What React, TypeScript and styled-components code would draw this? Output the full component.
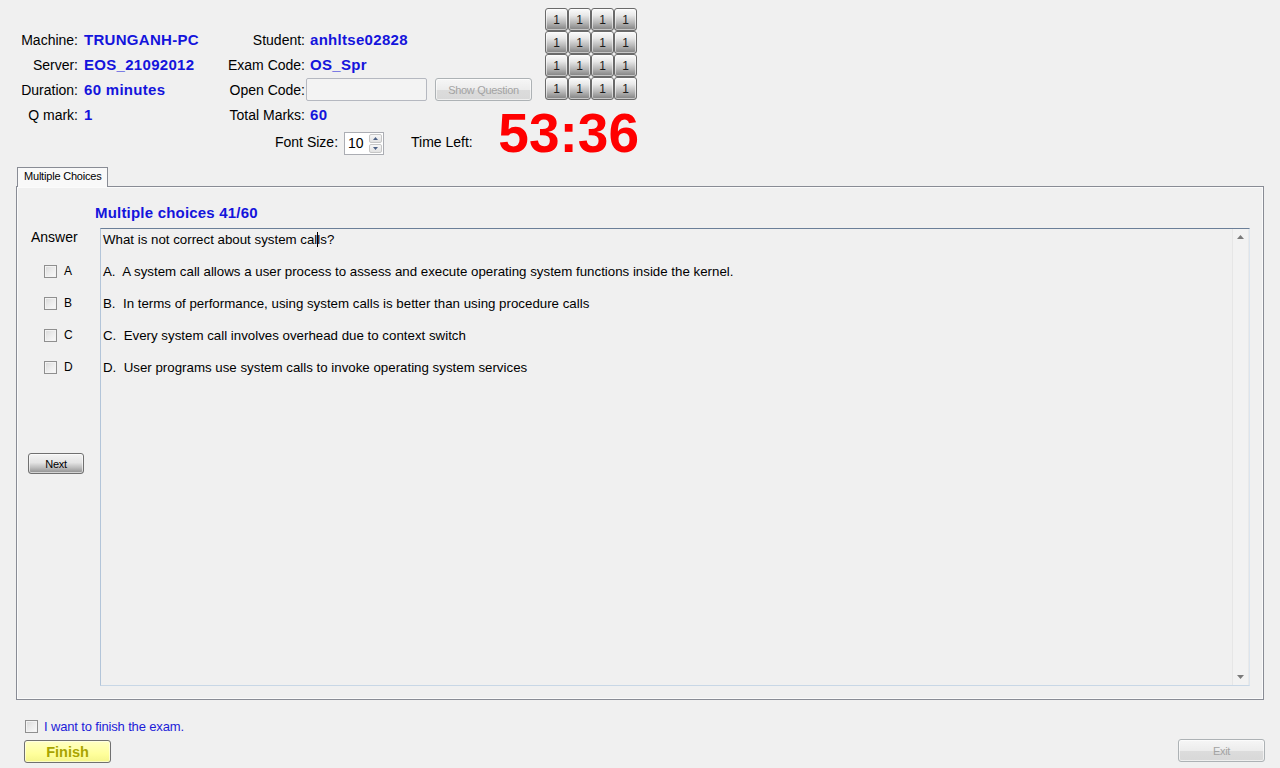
import React from "react";
import styled, { createGlobalStyle } from "styled-components";

const GlobalStyle = createGlobalStyle`
  html, body { margin: 0; padding: 0; background: #f0f0f0; }
  body { font-family: "Liberation Sans", Arial, sans-serif; color: #000; }
  * { box-sizing: border-box; }
`;

const Window = styled.div`
  width: 1280px;
  height: 768px;
  overflow: hidden;
  background: #f0f0f0;
  display: flex;
  flex-direction: column;
`;

const Header = styled.div`
  display: grid;
  grid-template-columns: 78px 132px 95px 194px 46px 92px;
  grid-template-rows: 27px 25px 25px 25px 25px 38px;
  font-size: 14px;
`;

const Label = styled.div<{ $col: number; $row: number }>`
  grid-column: ${(p) => p.$col};
  grid-row: ${(p) => p.$row};
  align-self: center;
  text-align: right;
  white-space: nowrap;
  line-height: 16px;
  color: #000;
`;

const Value = styled.div<{ $col: number; $row: number; $pad: number }>`
  grid-column: ${(p) => p.$col};
  grid-row: ${(p) => p.$row};
  align-self: center;
  padding-left: ${(p) => p.$pad}px;
  white-space: nowrap;
  line-height: 17px;
  font-size: 15px;
  letter-spacing: 0.3px;
  font-weight: bold;
  color: #1414dc;
`;

const OpenCodeCell = styled.div`
  grid-column: 4 / 6;
  grid-row: 4;
  display: flex;
  align-items: center;
  gap: 8px;
  padding-left: 1px;
`;

const TextInput = styled.div`
  width: 121px;
  height: 23px;
  border: 1px solid #b5b8c0;
  border-radius: 2px;
  background: #f3f3f3;
`;

const WinButton = styled.button<{ $w: number; $h: number; $disabled?: boolean }>`
  width: ${(p) => p.$w}px;
  height: ${(p) => p.$h}px;
  padding: 0;
  font-family: "Liberation Sans", Arial, sans-serif;
  font-size: 11px;
  letter-spacing: -0.3px;
  border-radius: 3px;
  border: 1px solid ${(p) => (p.$disabled ? "#adb2b5" : "#707070")};
  color: ${(p) => (p.$disabled ? "#a3a3a3" : "#000")};
  background: ${(p) =>
    p.$disabled
      ? "linear-gradient(#f6f6f6 0%, #ececec 50%, #dcdcdc 51%, #d8d8d8 100%)"
      : "linear-gradient(#f4f4f4 0%, #e4e4e4 45%, #b8b8b8 75%, #8e8e8e 100%)"};
  box-shadow: inset 0 0 0 1px rgba(255, 255, 255, 0.6);
`;

const ExitButton = styled(WinButton)`
  margin-top: -1px;
`;

const FinishButton = styled.button`
  width: 87px;
  height: 23px;
  padding: 0;
  border: 1px solid #707070;
  border-radius: 3px;
  background: linear-gradient(#ffffc4 0%, #ffff9c 60%, #f5f58a 100%);
  box-shadow: inset 0 0 0 1px rgba(255, 255, 255, 0.5);
  font-family: "Liberation Sans", Arial, sans-serif;
  font-size: 14.5px;
  font-weight: bold;
  color: #a8a400;
`;

const ButtonGrid = styled.div`
  grid-column: 6;
  grid-row: 1 / 5;
  align-self: start;
  margin-top: 8px;
  display: grid;
  grid-template-columns: repeat(4, 23px);
  grid-template-rows: repeat(4, 23px);
`;

const GridButton = styled.div`
  display: flex;
  align-items: center;
  justify-content: center;
  border: 1px solid #6a6a6a;
  border-radius: 3px;
  background: linear-gradient(#fbfbfb 0%, #e8e8e8 30%, #b8b8b8 65%, #808080 100%);
  box-shadow: inset 0 0 0 1px rgba(255, 255, 255, 0.55);
  font-size: 12px;
  color: #1a1a1a;
`;

const FontRow = styled.div`
  grid-column: 3 / 5;
  grid-row: 6;
  display: flex;
  align-items: center;
  align-self: start;
  margin-top: 5px;
  padding-left: 65px;
  height: 23px;
`;

const FontLabel = styled.span`
  padding-bottom: 3px;
`;

const SpinBox = styled.div`
  width: 40px;
  height: 23px;
  margin-left: 6px;
  margin-right: 27px;
  border: 1px solid #abadb3;
  background: #fff;
  display: flex;
`;

const SpinValue = styled.div`
  flex: 1;
  padding-left: 3px;
  line-height: 21px;
  font-size: 14px;
`;

const SpinButtons = styled.div`
  width: 15px;
  display: flex;
  flex-direction: column;
  padding: 1px;
  gap: 1px;
`;

const SpinBtn = styled.div`
  flex: 1;
  display: flex;
  align-items: center;
  justify-content: center;
  border: 1px solid #c6c6c6;
  border-radius: 2px;
  background: linear-gradient(#f7f7f7, #e2e2e2);
`;

const Timer = styled.div`
  grid-column: 5 / 7;
  grid-row: 5 / 7;
  justify-self: end;
  align-self: center;
  margin-right: -2px;
  font-size: 55px;
  line-height: 55px;
  font-weight: bold;
  color: #ff0000;
`;

const TabStrip = styled.div`
  display: flex;
  padding-left: 17px;
  margin-top: 2px;
  position: relative;
  z-index: 1;
`;

const Tab = styled.div`
  width: 91px;
  height: 20px;
  margin-bottom: -1px;
  border: 1px solid #898c95;
  border-bottom: none;
  background: #f9f9f9;
  font-size: 11px;
  letter-spacing: -0.2px;
  line-height: 17px;
  padding-left: 6px;
  white-space: nowrap;
`;

const Panel = styled.div`
  margin: 0 16px;
  height: 514px;
  border: 1px solid #898c95;
  box-shadow: inset 0 0 0 1px #fbfbfb;
  background: #f0f0f0;
  display: grid;
  grid-template-columns: 83px 1fr;
  grid-template-rows: 17px 1fr;
  row-gap: 7px;
  padding: 17px 13px 13px 0;
`;

const SectionTitle = styled.div`
  grid-column: 2;
  grid-row: 1;
  margin-left: -5px;
  font-size: 15px;
  line-height: 17px;
  font-weight: bold;
  color: #1414dc;
  letter-spacing: 0.2px;
`;

const AnswerColumn = styled.div`
  grid-column: 1;
  grid-row: 2;
  display: flex;
  flex-direction: column;
`;

const AnswerLabel = styled.div`
  margin-left: 14px;
  height: 18px;
  line-height: 18px;
  font-size: 14px;
`;

const OptionList = styled.div`
  margin-top: 9px;
  display: flex;
  flex-direction: column;
`;

const OptionRow = styled.div`
  height: 32px;
  display: flex;
  align-items: center;
  gap: 7px;
  padding-left: 27px;
  font-size: 12px;
`;

const CheckBox = styled.span`
  display: inline-block;
  width: 13px;
  height: 13px;
  border: 1px solid #8f8f8f;
  background: linear-gradient(135deg, #d8d8d8 0%, #ececec 50%, #fafafa 100%);
  box-shadow: inset 0 0 0 1px #f3f3f3;
`;

const NextWrap = styled.div`
  margin-top: 70px;
  padding-left: 11px;
`;

const QuestionBox = styled.div`
  grid-column: 2;
  grid-row: 2;
  display: flex;
  border-top: 1px solid #6b7f98;
  border-left: 1px solid #b3c5d9;
  border-bottom: 1px solid #c8d7e6;
  border-right: 1px solid #dce5ee;
  background: #f0f0f0;
`;

const QuestionContent = styled.div`
  flex: 1;
  padding: 1px 0 0 2px;
  font-size: 13.3px;
`;

const QuestionText = styled.div`
  line-height: 20px;
  margin-bottom: 6px;
`;

const Caret = styled.span`
  display: inline-block;
  width: 1px;
  height: 15px;
  margin-right: -1px;
  vertical-align: -3px;
  background: #000;
`;

const OptionText = styled.div`
  line-height: 32px;
  white-space: pre;
`;

const ScrollBar = styled.div`
  width: 17px;
  display: flex;
  flex-direction: column;
  justify-content: space-between;
  align-items: center;
  padding: 6px 0 6px;
  border-left: 1px solid #e6e6e6;
  border-right: 1px solid #e9e9e9;
  background: #f2f2f2;
`;

const Footer = styled.div`
  display: flex;
  flex-direction: column;
  padding: 13px 15px 0 24px;
`;

const FinishCheckRow = styled.div`
  height: 26px;
  display: flex;
  align-items: center;
  gap: 6px;
  padding-left: 1px;
  font-size: 13px;
  letter-spacing: -0.15px;
  color: #1c1cd8;
`;

const ButtonRow = styled.div`
  margin-top: 1px;
  display: flex;
  justify-content: space-between;
  align-items: flex-start;
`;

const Arrow = ({ up }: { up: boolean }) => (
  <svg width="7" height="4" viewBox="0 0 7 4">
    <polygon points={up ? "3.5,0 7,4 0,4" : "0,0 7,0 3.5,4"} fill="#7a7a7a" />
  </svg>
);

const SmallArrow = ({ up }: { up: boolean }) => (
  <svg width="5" height="3" viewBox="0 0 5 3">
    <polygon points={up ? "2.5,0 5,3 0,3" : "0,0 5,0 2.5,3"} fill="#4d6185" />
  </svg>
);

const options = [
  { key: "A", text: "A.  A system call allows a user process to assess and execute operating system functions inside the kernel." },
  { key: "B", text: "B.  In terms of performance, using system calls is better than using procedure calls" },
  { key: "C", text: "C.  Every system call involves overhead due to context switch" },
  { key: "D", text: "D.  User programs use system calls to invoke operating system services" },
];

export default function App() {
  return (
    <Window>
      <GlobalStyle />
      <Header>
        <Label $col={1} $row={2}>Machine:</Label>
        <Value $col={2} $row={2} $pad={6}>TRUNGANH-PC</Value>
        <Label $col={3} $row={2}>Student:</Label>
        <Value $col={4} $row={2} $pad={5}>anhltse02828</Value>

        <Label $col={1} $row={3}>Server:</Label>
        <Value $col={2} $row={3} $pad={6}>EOS_21092012</Value>
        <Label $col={3} $row={3}>Exam Code:</Label>
        <Value $col={4} $row={3} $pad={5}>OS_Spr</Value>

        <Label $col={1} $row={4}>Duration:</Label>
        <Value $col={2} $row={4} $pad={6}>60 minutes</Value>
        <Label $col={3} $row={4}>Open Code:</Label>
        <OpenCodeCell>
          <TextInput />
          <WinButton $w={97} $h={23} $disabled>Show Question</WinButton>
        </OpenCodeCell>

        <Label $col={1} $row={5}>Q mark:</Label>
        <Value $col={2} $row={5} $pad={6}>1</Value>
        <Label $col={3} $row={5}>Total Marks:</Label>
        <Value $col={4} $row={5} $pad={5}>60</Value>

        <ButtonGrid>
          {Array.from({ length: 16 }).map((_, i) => (
            <GridButton key={i}>1</GridButton>
          ))}
        </ButtonGrid>

        <FontRow>
          <FontLabel>Font Size:</FontLabel>
          <SpinBox>
            <SpinValue>10</SpinValue>
            <SpinButtons>
              <SpinBtn><SmallArrow up /></SpinBtn>
              <SpinBtn><SmallArrow up={false} /></SpinBtn>
            </SpinButtons>
          </SpinBox>
          <FontLabel>Time Left:</FontLabel>
        </FontRow>

        <Timer>53:36</Timer>
      </Header>

      <TabStrip>
        <Tab>Multiple Choices</Tab>
      </TabStrip>
      <Panel>
        <SectionTitle>Multiple choices 41/60</SectionTitle>
        <AnswerColumn>
          <AnswerLabel>Answer</AnswerLabel>
          <OptionList>
            {options.map((o) => (
              <OptionRow key={o.key}>
                <CheckBox />
                <span>{o.key}</span>
              </OptionRow>
            ))}
          </OptionList>
          <NextWrap>
            <WinButton $w={56} $h={21}>Next</WinButton>
          </NextWrap>
        </AnswerColumn>
        <QuestionBox>
          <QuestionContent>
            <QuestionText>
              What is not correct about system cal<Caret />ls?
            </QuestionText>
            {options.map((o) => (
              <OptionText key={o.key}>{o.text}</OptionText>
            ))}
          </QuestionContent>
          <ScrollBar>
            <Arrow up />
            <Arrow up={false} />
          </ScrollBar>
        </QuestionBox>
      </Panel>

      <Footer>
        <FinishCheckRow>
          <CheckBox />
          <span>I want to finish the exam.</span>
        </FinishCheckRow>
        <ButtonRow>
          <FinishButton>Finish</FinishButton>
          <ExitButton $w={87} $h={23} $disabled>Exit</ExitButton>
        </ButtonRow>
      </Footer>
    </Window>
  );
}
